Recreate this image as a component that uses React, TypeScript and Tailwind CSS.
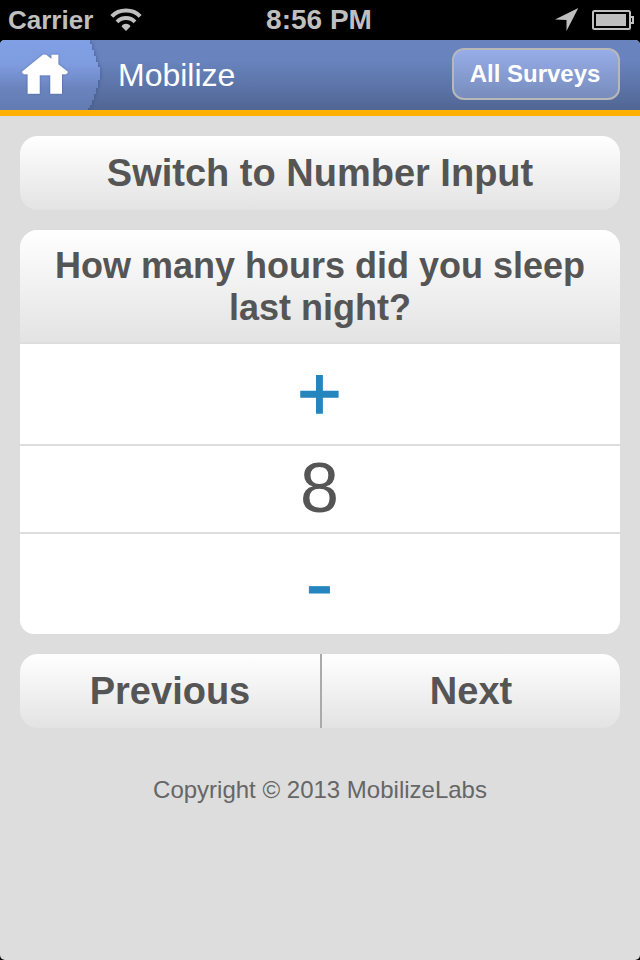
const buttonFill = 'bg-linear-to-b from-white to-[#e3e3e3]';

function StatusBar() {
  return (
    <div className="flex h-10 items-center justify-between bg-black pl-2 pr-[6px] font-bold text-[#bfbfbf]">
      <div className="flex w-[248px] items-center gap-[17px]">
        <span className="text-[26px] leading-10">Carrier</span>
        <svg width="32" height="24" viewBox="0 0 32 24" fill="none" stroke="#bfbfbf" strokeWidth="4">
          <path d="M1.8 8.4C9 .6 23 .6 30.2 8.4" />
          <path d="M7 13.8C12 8.8 20 8.8 25 13.8" />
          <path d="M16 23l-4.4-4.4c.6-3.8 8.2-3.8 8.8 0z" fill="#bfbfbf" stroke="none" />
        </svg>
      </div>
      <span className="-ml-[2px] text-[28px] leading-10">8:56 PM</span>
      <div className="flex w-[250px] items-center justify-end gap-[13px]">
        <svg width="24" height="24" viewBox="0 0 24 24" fill="#bfbfbf">
          <path d="M23.3 0 11.5 23V12L0 11.6z" />
        </svg>
        <svg width="42" height="20" viewBox="0 0 42 20">
          <rect x="1" y="1" width="37" height="18" rx="1.5" fill="none" stroke="#bfbfbf" strokeWidth="2" />
          <rect x="4" y="4" width="30" height="12" fill="#bfbfbf" />
          <path d="M38 7h3v6h-3" fill="none" stroke="#bfbfbf" strokeWidth="2" />
        </svg>
      </div>
    </div>
  );
}

function Header() {
  return (
    <header className="flex h-[76px] items-center rounded-t-[5px] border-b-[6px] border-[#ffb000] bg-linear-to-b from-[#6883bd] from-30% to-[#506694]">
      <svg width="104" height="70" viewBox="0 0 104 70" className="shrink-0">
        <defs>
          <linearGradient id="tab" x1="0" y1="0" x2="0" y2="1">
            <stop offset="0" stopColor="#809fe4" />
            <stop offset=".35" stopColor="#7f9ce0" />
            <stop offset=".7" stopColor="#6a83bd" />
            <stop offset="1" stopColor="#637bb2" />
          </linearGradient>
          <filter id="tabShadow" x="-10%" y="-10%" width="120%" height="120%">
            <feDropShadow dx="1" dy="0" stdDeviation="1.8" floodColor="#344c80" floodOpacity=".5" />
          </filter>
          <filter id="houseGlow" x="-20%" y="-20%" width="140%" height="140%">
            <feDropShadow dx="0" dy="0" stdDeviation="1" floodColor="#40507c" floodOpacity=".7" />
          </filter>
        </defs>
        <path
          d="M0 5Q0 0 5 0H90V4H92V10H94V16H96V22H98V27H100V40H98V48H96V54H94V60H92V65H90V68H88V70H0z"
          fill="url(#tab)"
          filter="url(#tabShadow)"
        />
        <path
          d="M22.2 31.5 42.5 15Q44.5 13.8 46.5 15L51.5 19V14.8H58.3V24.3L67.6 31.5V33L66 34.3H62V53.7H50.3V35.3H39.7V53.7H27.7V34.3H24L22.2 33z"
          fill="#fff"
          filter="url(#houseGlow)"
        />
      </svg>
      <h1 className="ml-[14px] flex-1 text-[32px] leading-[70px] text-white">Mobilize</h1>
      <button className="mr-5 mb-[2px] h-[52px] w-[168px] rounded-xl border-2 border-[#b8b8b8] bg-linear-to-b from-[#97ade8] to-[#778cbc] pr-[2px] text-[24px] font-bold text-white">
        All Surveys
      </button>
    </header>
  );
}

export default function App() {
  return (
    <div
      className="h-[960px] w-[640px] overflow-hidden bg-black text-[#555]"
      style={{ fontFamily: '"Liberation Sans", Arial, sans-serif' }}
    >
      <StatusBar />
      <div className="h-[920px] rounded-[5px] bg-[#ddd]">
        <Header />
        <main className="flex flex-col gap-5 px-5 pt-5">
          <button className={`h-[74px] rounded-[18px] text-[38px] font-bold ${buttonFill}`}>
            Switch to Number Input
          </button>
          <section className="overflow-hidden rounded-t-[18px] rounded-b-[14px] bg-white text-center">
            <h2 className={`h-[114px] border-b-2 border-[#ddd] px-5 pt-[15px] text-[36px] leading-[42px] font-bold ${buttonFill}`}>
              How many hours did you sleep last night?
            </h2>
            <button className="block h-[102px] w-full border-b-2 border-[#ddd] pr-px text-[76px] leading-[100px] text-[#2586bd] [-webkit-text-stroke:1.4px_#2586bd]">
              +
            </button>
            <div className="h-[88px] border-b-2 border-[#ddd] pr-px text-[70px] leading-[84px]">8</div>
            <button className="block h-[100px] w-full pr-px text-[82px] leading-[100px] text-[#2586bd] [-webkit-text-stroke:1px_#2586bd]">
              -
            </button>
          </section>
          <nav className="flex h-[74px] overflow-hidden rounded-[18px] text-[38px] font-bold">
            <button className={`w-[302px] border-r-2 border-[#aaa] ${buttonFill}`}>Previous</button>
            <button className={`flex-1 ${buttonFill}`}>Next</button>
          </nav>
        </main>
        <footer className="mt-[42px] text-center text-[24px] leading-10 text-[#666]">
          Copyright © 2013 MobilizeLabs
        </footer>
      </div>
    </div>
  );
}
